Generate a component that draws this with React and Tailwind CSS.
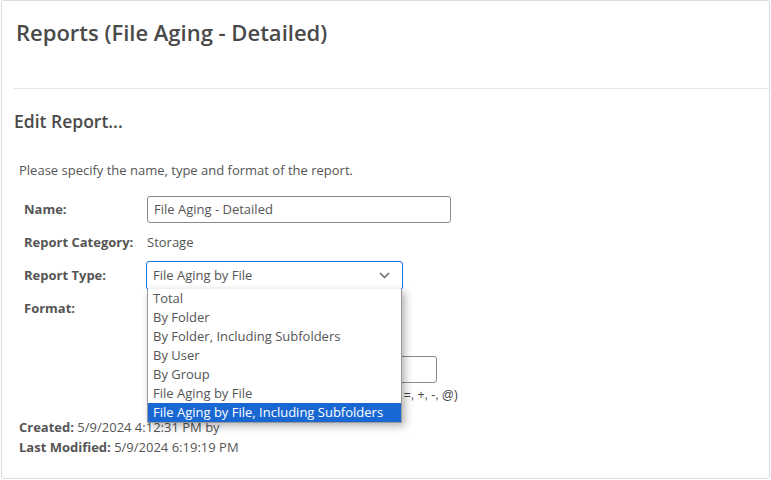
import React from "react";

const options = [
  "Total",
  "By Folder",
  "By Folder, Including Subfolders",
  "By User",
  "By Group",
  "File Aging by File",
  "File Aging by File, Including Subfolders",
];

function Row({ label, children }) {
  return (
    <div className="flex items-center h-[33px]">
      <div className="w-[123px] font-bold text-[#555]">{label}</div>
      <div className="flex-1">{children}</div>
    </div>
  );
}

export default function App() {
  return (
    <div
      className="w-[771px] h-[480px] bg-white text-[13px] text-[#555]"
      style={{ fontFamily: '"Open Sans", "Noto Sans", sans-serif' }}
    >
      <div className="ml-[1px] w-[769px] h-[479px] border border-[#dcdcdc] rounded-[3px] flex flex-col">
        <div className="h-[88px] pt-[16px] border-b border-[#e5e5e5] ml-[12px]">
          <h1 className="ml-[2px] text-[22px] leading-[30px] font-semibold text-[#4a4a4a]">
            Reports (File Aging - Detailed)
          </h1>
        </div>

        <div className="px-[12px] pt-[20px]">
          <h2 className="text-[17.5px] leading-[24px] font-semibold text-[#4a4a4a]">Edit Report...</h2>

          <p className="mt-[27px] pl-[5px] leading-[20px]">Please specify the name, type and format of the report.</p>

          <div className="mt-[13px] pl-[10px] relative">
            <Row label="Name:">
              <div className="w-[304px] h-[27px] border border-[#8a8a8a] rounded-[3px] px-[6px] flex items-center">
                File Aging - Detailed
              </div>
            </Row>
            <Row label="Report Category:">
              <span>Storage</span>
            </Row>
            <Row label="Report Type:">
              <div className="relative w-[257px] -ml-[1px]">
                <div className="h-[29px] border-[1.5px] border-[#1a73e8] rounded-[3px] pl-[6px] pr-[12px] flex items-center justify-between">
                  <span>File Aging by File</span>
                  <svg width="11" height="7" viewBox="0 0 11 7" fill="none">
                    <path d="M1 1l4.5 4.5L10 1" stroke="#666" strokeWidth="1.5" />
                  </svg>
                </div>
                <ul className="absolute z-10 left-[1px] top-[28px] w-[255px] bg-white border border-[#9a9a9a] border-t-0 shadow-[3px_3px_8px_rgba(0,0,0,0.3)]">
                  {options.map((o) => (
                    <li
                      key={o}
                      className={`h-[19px] leading-[19px] px-[5px] ${
                        o === "File Aging by File, Including Subfolders"
                          ? "bg-[#1967d2] text-white"
                          : "text-[#555]"
                      }`}
                    >
                      {o}
                    </li>
                  ))}
                </ul>
              </div>
            </Row>
            <div className="flex h-[111px]">
              <div className="w-[123px] font-bold h-[33px] flex items-center">Format:</div>
              <div className="flex-1 pt-[64px]">
                <div className="w-[290px] h-[27px] border border-[#8a8a8a] rounded-[3px]" />
                <div
                  className="w-[311px] mt-[3px] text-right whitespace-nowrap overflow-hidden text-[12px] text-[#444]"
                  style={{ fontFamily: '"Liberation Sans", Arial, sans-serif' }}
                >
                  (Not allowed: \, /, :, *, ?, ", &lt;, &gt;, |, =, +, -, @)
                </div>
              </div>
            </div>
          </div>

          <div className="pl-[5px] mt-[14px] leading-[20px]">
            <div>
              <span className="font-bold">Created:</span> 5/9/2024 4:12:31 PM by
            </div>
            <div>
              <span className="font-bold">Last Modified:</span> 5/9/2024 6:19:19 PM
            </div>
          </div>
        </div>
      </div>
    </div>
  );
}
